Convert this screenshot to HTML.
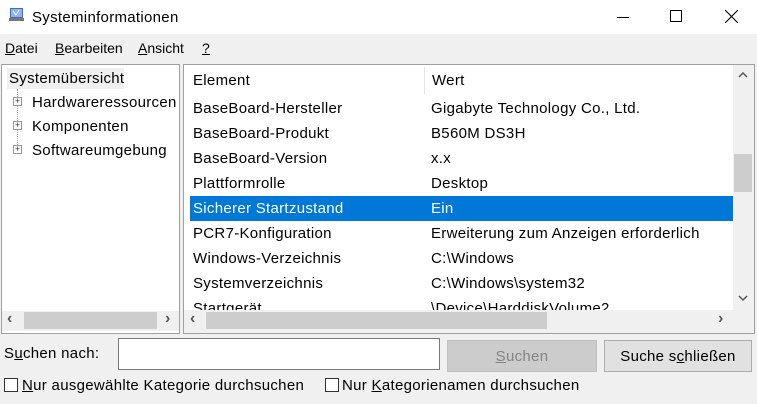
<!DOCTYPE html>
<html><head><meta charset="utf-8"><style>
*{margin:0;padding:0;box-sizing:border-box}
body{width:757px;height:404px;background:#f0f0f0;font-family:"Liberation Sans",sans-serif;font-size:15px;letter-spacing:0.3px;color:#000;position:relative;overflow:hidden}
.a{position:absolute;white-space:nowrap}
u{text-decoration:underline}
.row{position:absolute;left:190px;width:543px;height:25px;line-height:26px}
.row span{position:absolute}
.row .k{left:3px}.row .v{left:241px}
.arr{font-size:16px;color:#555;font-weight:bold}
.m{font-size:14px;letter-spacing:0}
</style></head><body>
<div class="a" style="left:0;top:0;width:757px;height:34px;background:#fff"></div>
<svg class="a" style="left:8px;top:6px" width="18" height="18" viewBox="0 0 18 18"><rect x="2" y="2" width="13" height="10" fill="#3a6fc4"/><rect x="3" y="3" width="11" height="8" fill="#8fb4ea"/><rect x="1" y="12" width="15" height="3" fill="#777"/><path d="M5 5l3 4 3-5" stroke="#fff" fill="none"/></svg>
<div class="a" style="left:32px;top:9px">Systeminformationen</div>
<div class="a" style="left:617px;top:17px;width:12px;height:1px;background:#000"></div>
<div class="a" style="left:670px;top:10px;width:12px;height:12px;border:1px solid #000"></div>
<svg class="a" style="left:725px;top:10px" width="13" height="13"><path d="M0 0L13 13M13 0L0 13" stroke="#000" stroke-width="1.1"/></svg>
<div class="a m" style="left:5px;top:40px"><u>D</u>atei</div>
<div class="a m" style="left:55px;top:40px"><u>B</u>earbeiten</div>
<div class="a m" style="left:138px;top:40px"><u>A</u>nsicht</div>
<div class="a m" style="left:202px;top:40px"><u>?</u></div>

<div class="a" style="left:1px;top:64px;width:179px;height:270px;background:#fff;border:1px solid #a0a0a0"></div>
<div class="a" style="left:7px;top:68px;width:117px;height:21px;background:#f0f0f0"></div>
<div class="a" style="left:9px;top:70px">Systemübersicht</div>
<div class="a" style="left:17px;top:89px;height:62px;border-left:1px dotted #999"></div>
<div class="a" style="left:13px;top:97px;width:9px;height:9px;border:1px solid #999;background:#fff;font-size:9px;line-height:7px;text-align:center;color:#333;letter-spacing:0">+</div>
<div class="a" style="left:13px;top:121px;width:9px;height:9px;border:1px solid #999;background:#fff;font-size:9px;line-height:7px;text-align:center;color:#333;letter-spacing:0">+</div>
<div class="a" style="left:13px;top:145px;width:9px;height:9px;border:1px solid #999;background:#fff;font-size:9px;line-height:7px;text-align:center;color:#333;letter-spacing:0">+</div>
<div class="a" style="left:32px;top:94px">Hardwareressourcen</div>
<div class="a" style="left:32px;top:118px">Komponenten</div>
<div class="a" style="left:32px;top:142px">Softwareumgebung</div>
<div class="a" style="left:2px;top:311px;width:177px;height:20px;background:#f0f0f0"></div>
<div class="a" style="left:24px;top:312px;width:133px;height:17px;background:#cdcdcd"></div>
<div class="a arr" style="left:7px;top:310px">‹</div>
<div class="a arr" style="left:165px;top:310px">›</div>

<div class="a" style="left:183px;top:64px;width:572px;height:270px;background:#fff;border:1px solid #a0a0a0"></div>
<div class="a" style="left:424px;top:67px;width:1px;height:27px;background:#e5e5e5"></div>
<div class="a" style="left:193px;top:72px">Element</div>
<div class="a" style="left:432px;top:72px">Wert</div>
<div class="row" style="top:96px"><span class="k">BaseBoard-Hersteller</span><span class="v">Gigabyte Technology Co., Ltd.</span></div>
<div class="row" style="top:121px"><span class="k">BaseBoard-Produkt</span><span class="v">B560M DS3H</span></div>
<div class="row" style="top:146px"><span class="k">BaseBoard-Version</span><span class="v">x.x</span></div>
<div class="row" style="top:171px"><span class="k">Plattformrolle</span><span class="v">Desktop</span></div>
<div class="row" style="top:196px;background:#0078d7;color:#fff"><span class="k">Sicherer Startzustand</span><span class="v">Ein</span></div>
<div class="row" style="top:221px"><span class="k">PCR7-Konfiguration</span><span class="v">Erweiterung zum Anzeigen erforderlich</span></div>
<div class="row" style="top:246px"><span class="k">Windows-Verzeichnis</span><span class="v">C:\Windows</span></div>
<div class="row" style="top:271px"><span class="k">Systemverzeichnis</span><span class="v">C:\Windows\system32</span></div>
<div class="row" style="top:296px;height:14px;overflow:hidden"><span class="k">Startgerät</span><span class="v">\Device\HarddiskVolume2</span></div>
<div class="a" style="left:733px;top:65px;width:21px;height:245px;background:#f0f0f0"></div>
<div class="a" style="left:734px;top:154px;width:18px;height:38px;background:#cdcdcd"></div>
<svg class="a" style="left:738px;top:71px" width="10" height="8"><path d="M1 6L5 2L9 6" stroke="#555" stroke-width="1.5" fill="none"/></svg>
<svg class="a" style="left:738px;top:294px" width="10" height="8"><path d="M1 2L5 6L9 2" stroke="#555" stroke-width="1.5" fill="none"/></svg>
<div class="a" style="left:184px;top:310px;width:570px;height:23px;background:#f0f0f0"></div>
<div class="a" style="left:206px;top:312px;width:341px;height:17px;background:#cdcdcd"></div>
<div class="a arr" style="left:190px;top:310px">‹</div>
<div class="a arr" style="left:718px;top:310px">›</div>

<div class="a" style="left:4px;top:345px">S<u>u</u>chen nach:</div>
<div class="a" style="left:118px;top:338px;width:322px;height:32px;background:#fff;border:1px solid #7a7a7a"></div>
<div class="a" style="left:447px;top:340px;width:150px;height:32px;background:#cccccc;border:1px solid #bfbfbf;color:#838383;text-align:center;line-height:32px"><u>S</u>uchen</div>
<div class="a" style="left:604px;top:340px;width:148px;height:32px;background:#e1e1e1;border:1px solid #adadad;text-align:center;line-height:32px">Suche s<u>c</u>hließen</div>
<div class="a" style="left:4px;top:378px;width:14px;height:14px;border:1px solid #333;background:#fff"></div>
<div class="a" style="left:22px;top:377px"><u>N</u>ur ausgewählte Kategorie durchsuchen</div>
<div class="a" style="left:325px;top:378px;width:14px;height:14px;border:1px solid #333;background:#fff"></div>
<div class="a" style="left:342px;top:377px">Nur <u>K</u>ategorienamen durchsuchen</div>
</body></html>
